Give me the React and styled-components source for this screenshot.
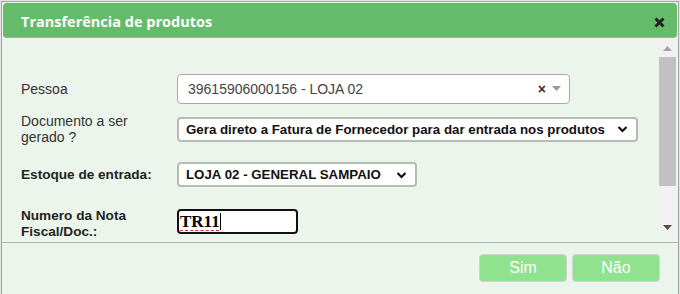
import React from "react";
import styled, { createGlobalStyle } from "styled-components";

const Global = createGlobalStyle`
  html, body { margin: 0; padding: 0; }
  body {
    background: #e4e4e4;
    font-family: "Liberation Sans", Arial, sans-serif;
    width: 680px;
    height: 294px;
    overflow: hidden;
  }
`;

const Dialog = styled.div`
  margin: 1px 0 0 1px;
  width: 676px;
  height: 300px;
  border: 1px solid #a3a3a3;
  background: #ecf5ec;
  display: flex;
  flex-direction: column;
`;

const Header = styled.div`
  margin: 1px 0 0 1px;
  width: 674px;
  height: 35px;
  box-sizing: border-box;
  background: #64bb6a;
  border-radius: 4px;
  border-bottom: 1px solid #9fb09f;
  display: flex;
  align-items: center;
  justify-content: space-between;
  padding: 0 12px 0 18px;
`;

const Title = styled.span`
  font-family: "Open Sans", sans-serif;
  font-weight: 700;
  font-size: 14.5px;
  color: #ffffff;
  margin-top: 2px;
`;

const Close = styled.button`
  border: 0;
  background: transparent;
  padding: 0;
  width: 11px;
  height: 11px;
  display: flex;
  cursor: pointer;
  margin-top: 4px;
`;

const BodyRow = styled.div`
  margin-top: 2px;
  height: 196px;
  display: flex;
`;

const Content = styled.div`
  flex: 1;
  padding: 34px 0 0 19px;
  display: flex;
  flex-direction: column;
`;

const Row = styled.div`
  display: flex;
  align-items: ${(p) => p.$align || "center"};
  margin-top: ${(p) => p.$mt || 0}px;
  min-height: ${(p) => p.$h || 0}px;
`;

const Label = styled.div`
  width: 156px;
  font-size: ${(p) => (p.$bold ? "13.6px" : "14px")};
  line-height: 16px;
  color: ${(p) => (p.$bold ? "#222" : "#333")};
  font-weight: ${(p) => (p.$bold ? 700 : 400)};
`;

const Combo = styled.div`
  width: 393px;
  height: 30px;
  box-sizing: border-box;
  border: 1px solid #aaa;
  border-radius: 4px;
  background: #fff;
  display: flex;
  align-items: center;
  padding: 0 8px 0 10px;
  font-size: 14px;
  color: #444;
`;

const ComboText = styled.span`
  flex: 1;
`;

const Clear = styled.span`
  font-size: 14px;
  font-weight: 700;
  color: #333;
  margin-right: 6px;
  margin-top: -1px;
`;

const Select = styled.div`
  width: ${(p) => p.$w}px;
  height: 25px;
  box-sizing: border-box;
  border: 2px solid #b4bcb4;
  border-radius: 4px;
  background: #fff;
  display: flex;
  align-items: center;
  justify-content: space-between;
  padding: 0 8px 0 7px;
  font-size: 13.3px;
  font-weight: 700;
  color: #111;
  white-space: nowrap;
`;

const TextBox = styled.div`
  width: 121px;
  height: 25px;
  margin-top: 1px;
  box-sizing: border-box;
  border: 2px solid #111;
  border-radius: 4px;
  background: #fff;
  display: flex;
  align-items: center;
  padding-left: 1px;
  font-family: "Liberation Serif", serif;
  font-weight: 700;
  font-size: 17px;
  color: #000;
`;

const Misspelled = styled.span`
  text-decoration: underline dashed #e53030;
  text-underline-offset: 3px;
  text-decoration-thickness: 1px;
`;

const Caret = styled.span`
  display: inline-block;
  width: 1px;
  height: 17px;
  background: #000;
`;

const ScrollBar = styled.div`
  width: 17px;
  margin-right: 2px;
  background: #f1f1f1;
  display: flex;
  flex-direction: column;
`;

const Arrow = styled.div`
  height: 17px;
  display: flex;
  align-items: center;
  justify-content: center;
`;

const Thumb = styled.div`
  height: 129px;
  background: #c1c1c1;
`;

const Track = styled.div`
  flex: 1;
`;

const Footer = styled.div`
  margin-top: 6px;
  border-top: 1px solid #aeb4ae;
  display: flex;
  justify-content: flex-end;
  gap: 5px;
  padding: 11px 18px 0 0;
`;

const Button = styled.button`
  width: 88px;
  height: 28px;
  border: 1px solid #cdd5cd;
  border-radius: 4px;
  background: #91e28f;
  color: #ffffff;
  font-family: "Liberation Sans", Arial, sans-serif;
  font-size: 16px;
  padding: 0;
  cursor: pointer;
`;

const Chevron = () => (
  <svg width="11" height="8" viewBox="0 0 11 8">
    <path d="M1.5 2 L5.5 6 L9.5 2" fill="none" stroke="#111" strokeWidth="2.2" />
  </svg>
);

export default function App() {
  return (
    <>
      <Global />
      <Dialog>
        <Header>
          <Title>Transferência de produtos</Title>
          <Close aria-label="Fechar">
            <svg width="11" height="11" viewBox="0 0 11 11">
              <path d="M1.5 1.5 L9.5 9.5 M9.5 1.5 L1.5 9.5" stroke="#222" strokeWidth="3" />
            </svg>
          </Close>
        </Header>
        <BodyRow>
          <Content>
            <Row $h={30}>
              <Label>Pessoa</Label>
              <Combo>
                <ComboText>39615906000156 - LOJA 02</ComboText>
                <Clear>×</Clear>
                <svg width="9" height="6" viewBox="0 0 9 6">
                  <path d="M0 0 L9 0 L4.5 5 Z" fill="#999" />
                </svg>
              </Combo>
            </Row>
            <Row $h={32} $mt={9}>
              <Label>
                Documento a ser
                <br />
                gerado ?
              </Label>
              <Select $w={461}>
                <span>Gera direto a Fatura de Fornecedor para dar entrada nos produtos</span>
                <Chevron />
              </Select>
            </Row>
            <Row $h={25} $mt={17}>
              <Label $bold>Estoque de entrada:</Label>
              <Select $w={240}>
                <span>LOJA 02 - GENERAL SAMPAIO</span>
                <Chevron />
              </Select>
            </Row>
            <Row $h={32} $mt={21} $align="flex-start">
              <Label $bold>
                Numero da Nota
                <br />
                Fiscal/Doc.:
              </Label>
              <TextBox role="textbox">
                <Misspelled>TR11</Misspelled>
                <Caret />
              </TextBox>
            </Row>
          </Content>
          <ScrollBar>
            <Arrow>
              <svg width="9" height="5" viewBox="0 0 9 5">
                <path d="M0 5 L9 5 L4.5 0 Z" fill="#a3a3a3" />
              </svg>
            </Arrow>
            <Thumb />
            <Track />
            <Arrow>
              <svg width="9" height="5" viewBox="0 0 9 5">
                <path d="M0 0 L9 0 L4.5 5 Z" fill="#505050" />
              </svg>
            </Arrow>
          </ScrollBar>
        </BodyRow>
        <Footer>
          <Button>Sim</Button>
          <Button>Não</Button>
        </Footer>
      </Dialog>
    </>
  );
}
